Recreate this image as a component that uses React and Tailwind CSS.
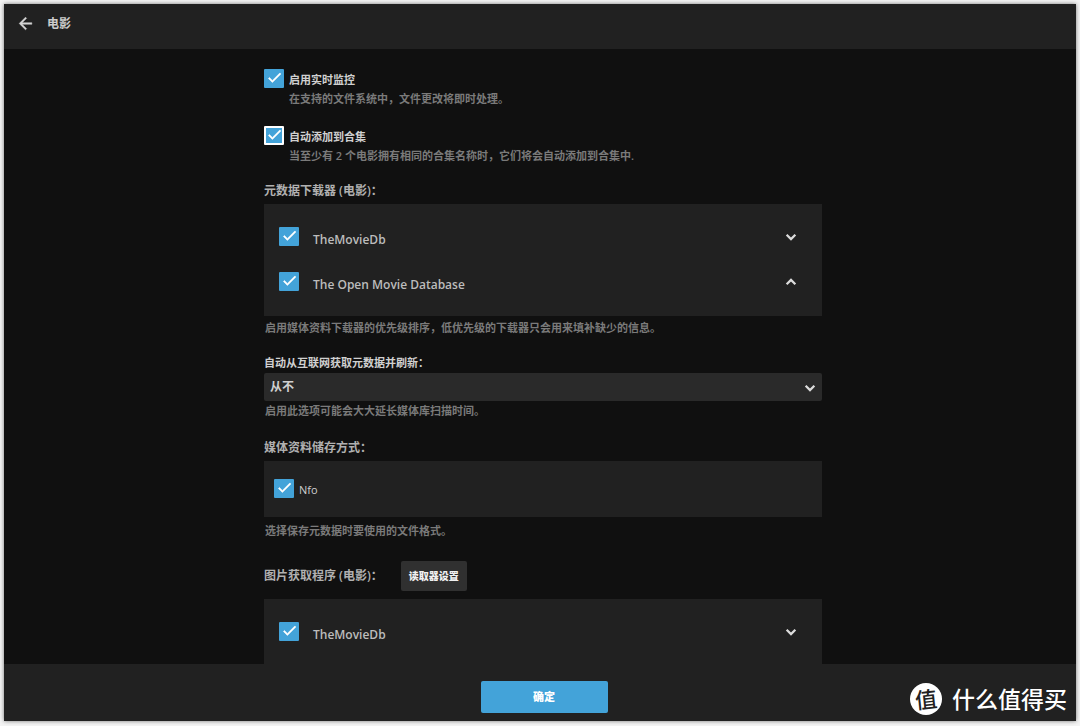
import React, { useState } from 'react';

function CheckBox({ id, defaultChecked = true, focused = false }) {
  return (
    <span className="relative flex h-5 w-5 shrink-0 items-start">
      <input
        id={id}
        type="checkbox"
        defaultChecked={defaultChecked}
        className={`peer h-[19px] w-5 appearance-none rounded-[1px] border-2 bg-[#2b2b2b] checked:bg-[#43a3d9] ${
          focused ? 'border-white' : 'border-[#43a3d9]'
        }`}
      />
      <svg
        viewBox="0 0 24 24"
        className="pointer-events-none absolute inset-x-0 top-0 mx-auto hidden h-[17px] w-[17px] fill-white stroke-white stroke-[0.8] peer-checked:block"
      >
        <path d="M9 16.17L4.83 12l-1.42 1.41L9 19 21 7l-1.41-1.41z" />
      </svg>
    </span>
  );
}

function Chevron({ up = false }) {
  return (
    <svg viewBox="0 0 24 24" className="h-[18px] w-[18px] fill-none stroke-[#dcdcdc] stroke-3">
      <path d={up ? 'M6.2 15L12 9.2l5.8 5.8' : 'M6.2 9L12 14.8l5.8-5.8'} />
    </svg>
  );
}

// Checkbox with a label and a hint below it
function Option({ id, label, hint, focused }) {
  return (
    <div>
      <div className="flex items-start gap-[5px]">
        <CheckBox id={id} focused={focused} />
        <label htmlFor={id} className="pt-px text-[11px] leading-5 font-semibold text-[#d0d0d0]">{label}</label>
      </div>
      <p className="-mt-px pl-[25px] text-[11px] leading-5 font-semibold text-[#7a7a7a]">{hint}</p>
    </div>
  );
}

function ProviderList({ group, items }) {
  return (
    <ul className="bg-[#212121] pt-2.5 pb-3">
      {items.map((item, index) => (
        <li key={item} className="flex h-[45px] items-center pr-[22px] pl-[15px]">
          <CheckBox id={`${group}-${index}`} />
          <label htmlFor={`${group}-${index}`} className="flex-1 pt-1.5 pl-3.5 text-xs leading-5 font-semibold text-[#bcbcbc]">
            {item}
          </label>
          <button type="button" aria-label={index === 0 ? 'Down' : 'Up'}>
            <Chevron up={index > 0} />
          </button>
        </li>
      ))}
    </ul>
  );
}

function Hint({ children }) {
  return <p className="pl-px text-[11px] leading-5 font-semibold text-[#7a7a7a]">{children}</p>;
}

export default function App() {
  const [refresh, setRefresh] = useState('never');

  return (
    <div className="h-screen bg-[#f4f4f4] px-1 pt-1 pb-[5px] font-['Open_Sans','Noto_Sans_CJK_SC',sans-serif]">
      <div className="relative flex h-full flex-col bg-[#101010] shadow-[0_0_4px_#777]">
        <header className="flex h-[45px] shrink-0 items-center gap-3 bg-[#212121] pb-[7px] pl-3">
          <button type="button" aria-label="Back">
            <svg viewBox="0 0 24 24" className="h-[19px] w-[19px] fill-[#d6d6d6] stroke-[#d6d6d6] stroke-[0.6]">
              <path d="M20 11H7.83l5.59-5.59L12 4l-8 8 8 8 1.41-1.41L7.83 13H20v-2z" />
            </svg>
          </button>
          <h1 className="pt-px text-xs leading-5 font-bold text-[#cccccc]">电影</h1>
        </header>

        <main className="min-h-0 flex-1 overflow-hidden pt-5 pl-1.5">
          <form className="mx-auto w-full max-w-[558px]">
            <div className="flex flex-col gap-[17px]">
              <Option id="monitor" label="启用实时监控" hint="在支持的文件系统中，文件更改将即时处理。" />
              <Option
                id="collection"
                label="自动添加到合集"
                hint="当至少有 2 个电影拥有相同的合集名称时，它们将会自动添加到合集中."
                focused
              />
            </div>

            <section className="mt-[15px]">
              <h2 className="mb-[3px] text-xs leading-5 font-semibold text-[#b0b0b0]">元数据下载器 (电影)：</h2>
              <ProviderList group="meta" items={['TheMovieDb', 'The Open Movie Database']} />
              <div className="pt-0.5">
                <Hint>启用媒体资料下载器的优先级排序，低优先级的下载器只会用来填补缺少的信息。</Hint>
              </div>
            </section>

            <section className="mt-[15px]">
              <label htmlFor="refresh" className="block text-[11px] leading-5 font-semibold text-[#d0d0d0]">
                自动从互联网获取元数据并刷新：
              </label>
              <div className="relative">
                <select
                  id="refresh"
                  value={refresh}
                  onChange={(e) => setRefresh(e.target.value)}
                  className="block h-7 w-full appearance-none rounded-xs bg-[#2a2a2a] pl-1.5 text-xs font-semibold text-[#d0d0d0]"
                >
                  <option value="never">从不</option>
                </select>
                <span className="pointer-events-none absolute top-1.5 right-[3px]">
                  <Chevron />
                </span>
              </div>
              <Hint>启用此选项可能会大大延长媒体库扫描时间。</Hint>
            </section>

            <section className="mt-[17px]">
              <h2 className="mb-[3px] text-xs leading-5 font-semibold text-[#b0b0b0]">媒体资料储存方式：</h2>
              <div className="flex h-14 items-center gap-[5px] bg-[#212121] pl-2.5">
                <CheckBox id="nfo" />
                <label htmlFor="nfo" className="pt-0.5 text-[11px] leading-5 font-medium text-[#cfcfcf]">Nfo</label>
              </div>
              <div className="pt-1">
                <Hint>选择保存元数据时要使用的文件格式。</Hint>
              </div>
            </section>

            <section className="mt-5">
              <div className="mb-2 flex items-center gap-[18px]">
                <h2 className="text-xs leading-5 font-semibold text-[#b0b0b0]">图片获取程序 (电影)：</h2>
                <button type="button" className="h-[30px] rounded-xs bg-[#303030] px-2 text-[10px] font-extrabold text-[#f0f0f0]">
                  读取器设置
                </button>
              </div>
              <ProviderList group="image" items={['TheMovieDb']} />
            </section>
          </form>
        </main>

        <footer className="flex h-[57px] shrink-0 items-center justify-center bg-[#212121] pt-2 pl-2">
          <button type="button" className="h-8 w-[127px] rounded-xs bg-[#43a3d9] pt-0.5 text-[11px] font-extrabold text-white">
            确定
          </button>
        </footer>

        {/* Site mark over the footer */}
        <div className="absolute right-[9px] bottom-1.5 flex items-center gap-2.5 text-white">
          <span className="flex h-8 w-8 items-center justify-center rounded-full bg-white text-[22px] leading-8 font-medium text-[#212121]">
            <span className="-rotate-6">值</span>
          </span>
          <span className="text-[23px] leading-8 font-medium">什么值得买</span>
        </div>
      </div>
    </div>
  );
}
